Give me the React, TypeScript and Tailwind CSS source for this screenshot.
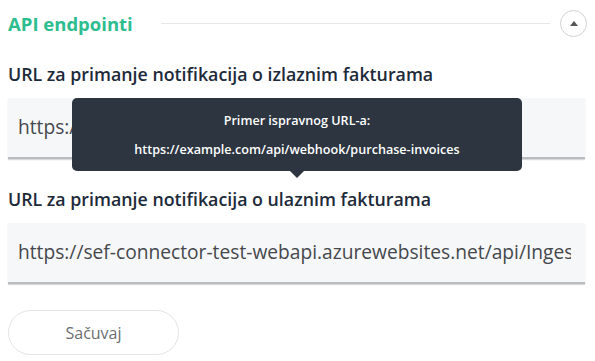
const font = { fontFamily: '"Open Sans", "Liberation Sans", sans-serif' };

function UrlField({ label, value, children }: { label: string; value: string; children?: React.ReactNode }) {
  return (
    <div className="flex flex-col">
      <label className="text-[17.8px] font-semibold text-[#1d2a39] leading-[24px] mb-[12px]">{label}</label>
      <div className="relative">
        <div className="h-[61px] bg-[#f6f7f9] border-b-2 border-[#b9bcc0] shadow-[0_1px_1px_rgba(0,0,0,0.15)] flex items-center pl-[10px] pr-[14px] overflow-hidden">
          <span className="text-[19.2px] text-[#45484c] whitespace-nowrap overflow-hidden">{value}</span>
        </div>
        {children}
      </div>
    </div>
  );
}

export default function App() {
  return (
    <div className="w-[595px] h-[361px] bg-white overflow-hidden" style={font}>
      <div className="pl-[8px] pr-[8px] pt-[10px]">
        <div className="flex items-center h-[27px]">
          <h2 className="text-[18.5px] font-bold text-[#2dbd8f] whitespace-nowrap">API endpointi</h2>
          <div className="flex-1 h-px bg-[#e6e7e9] ml-[28px] mr-[10px]" />
          <button className="w-[27px] h-[27px] rounded-full border border-[#cfd1d4] flex items-center justify-center">
            <svg width="8" height="5" viewBox="0 0 8 5"><path d="M4 0 L8 5 L0 5 Z" fill="#555" /></svg>
          </button>
        </div>

        <div className="mt-[25px] flex flex-col gap-[28px] pr-[2px]">
          <UrlField label="URL za primanje notifikacija o izlaznim fakturama" value="https://sef-connector-test-webapi.azurewebsites.net/">
            <div className="absolute left-[64px] top-0 w-[450px] h-[73px] bg-[#2c3540] rounded-[5px] flex flex-col items-center justify-center gap-[12px] text-white text-[12.6px] leading-[17px] font-semibold z-10">
              <span>Primer ispravnog URL-a:</span>
              <span>https://example.com/api/webhook/purchase-invoices</span>
              <div className="absolute left-1/2 -translate-x-1/2 -bottom-[7px] w-0 h-0 border-l-[7px] border-r-[7px] border-t-[7px] border-l-transparent border-r-transparent border-t-[#2c3540]" />
            </div>
          </UrlField>
          <UrlField label="URL za primanje notifikacija o ulaznim fakturama" value="https://sef-connector-test-webapi.azurewebsites.net/api/IngestPurchase" />
        </div>

        <button className="mt-[26px] w-[171px] h-[45px] rounded-full border border-[#e3e4e6] text-[16px] text-[#6b6e72] bg-white">
          Sačuvaj
        </button>
      </div>
    </div>
  );
}
